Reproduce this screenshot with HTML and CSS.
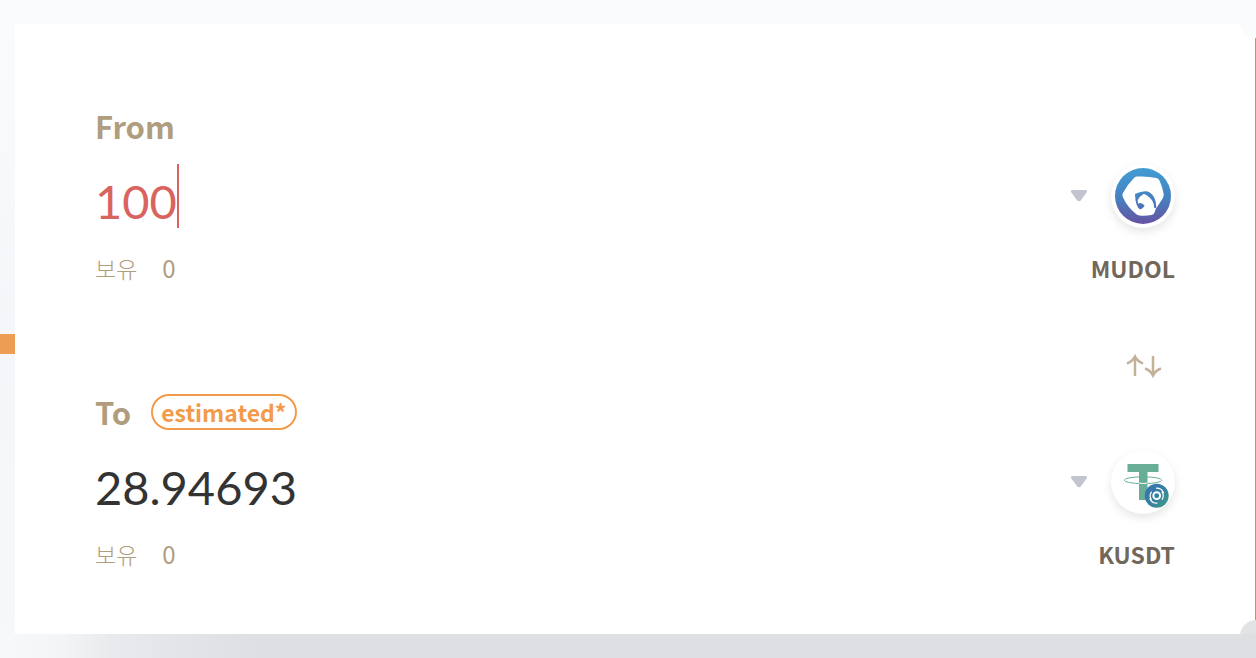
FILE: index.html
```html
<!DOCTYPE html>
<html lang="ko">
<head>
<meta charset="utf-8">
<meta name="viewport" content="width=device-width, initial-scale=1">
<title>Swap</title>
<link rel="stylesheet" href="styles.css">
</head>
<body>
<div class="page">
  <div class="rail"><span class="rail-tab"></span></div>
  <main class="card">
    <section class="side">
      <div class="heading"><label class="label" for="from-amount">From</label></div>
      <div class="row">
        <div class="field">
          <input class="amount amount-active" id="from-amount" type="text" inputmode="decimal" value="100" size="3">
          <span class="caret"></span>
        </div>
        <button class="token" type="button" aria-label="MUDOL">
          <svg class="chevron" viewBox="0 0 16 12" aria-hidden="true"><path d="M1.500 0h13C16 0 16.500 1.500 15.600 2.600L10 10.300C9 11.700 7 11.700 6 10.300L.4 2.600C-.5 1.500 0 0 1.500 0z"/></svg>
          <span class="coin">
            <svg class="coin-art" viewBox="0 0 64 64" aria-hidden="true">
              <defs><linearGradient id="mudol" gradientUnits="userSpaceOnUse" x1="32" y1="4" x2="32" y2="60"><stop offset="0" stop-color="#429cd3"/><stop offset=".5" stop-color="#4484c2"/><stop offset="1" stop-color="#6652a2"/></linearGradient></defs>
              <circle cx="32" cy="32" r="28" fill="url(#mudol)"/>
              <path fill="#fff" d="M25.500 12.600Q36 11.800 45.500 14Q47.800 14.600 48.700 17Q51.500 23 52.700 30Q52.900 32.500 51.700 34.500L45 44.500L43.500 48.500Q42.800 50.500 40.500 51Q34.500 52.200 28.500 51.600Q26.300 51.300 24.800 49.700Q16.500 43.500 11.800 33Q11 31 11.900 29Q16.500 20.500 23.200 13.800Q24.200 12.800 25.500 12.600z"/>
              <path fill="url(#mudol)" d="M24 30Q31 27 35.500 27.300Q45.500 30 45.200 44.500L43 43.500Q43.500 36.500 36 31.500Q34 29.500 32.500 30Q28.500 32.500 26.700 36L27 39.700Q30.500 37.500 33.700 41.700Q31.500 45 29.300 45.500Q24.300 43 24 30z"/>
            </svg>
          </span>
        </button>
      </div>
      <div class="row">
        <p class="balance"><span>보유</span><span class="balance-value">0</span></p>
        <p class="symbol">MUDOL</p>
      </div>
    </section>
    <div class="divider">
      <button class="swap" type="button" aria-label="Swap direction">
        <svg class="swap-art" viewBox="0 0 36 24" aria-hidden="true"><path d="M9 22V3M1 9.500Q6.500 7.500 9 2.500Q11.500 7.500 17 9.500M27 2v19M19 14.500Q24.500 16.500 27 21.500Q29.500 16.500 35 14.500"/></svg>
      </button>
    </div>
    <section class="side">
      <div class="heading"><label class="label" for="to-amount">To</label><span class="badge">estimated*</span></div>
      <div class="row">
        <div class="field">
          <input class="amount" id="to-amount" type="text" inputmode="decimal" value="28.94693" size="8">
        </div>
        <button class="token" type="button" aria-label="KUSDT">
          <svg class="chevron" viewBox="0 0 16 12" aria-hidden="true"><path d="M1.500 0h13C16 0 16.500 1.500 15.600 2.600L10 10.300C9 11.700 7 11.700 6 10.300L.4 2.600C-.5 1.500 0 0 1.500 0z"/></svg>
          <span class="coin">
            <svg class="coin-art" viewBox="0 0 64 64" aria-hidden="true">
              <defs><linearGradient id="orbit" x1="0" y1="0" x2="1" y2="1"><stop offset="0" stop-color="#3a73b4"/><stop offset=".5" stop-color="#347fa2"/><stop offset="1" stop-color="#43a083"/></linearGradient></defs>
              <path fill="#68ae97" d="M16.500 14H47.500v8H36.500v28h-8.500V22H16.500z"/>
              <ellipse cx="32" cy="30.200" rx="18.800" ry="3.400" fill="none" stroke="#68ae97" stroke-width="1"/>
              <path d="M28 33.200q4 .5 8.500 0" fill="none" stroke="#fff" stroke-width="1"/>
              <circle cx="45.700" cy="45.700" r="12" fill="url(#orbit)"/>
              <g fill="none" stroke="#fff" stroke-linecap="round">
                <circle cx="45.700" cy="45.700" r="3.400" stroke-width="1.900"/>
                <path stroke-width="1.200" d="M40.300 49.300a6.500 6.500 0 0 1 0-7.200M51.100 42.100a6.500 6.500 0 0 1 0 7.200M45.500 38.200a7.500 7.500 0 0 1 7 4.500M45.900 53.200a7.500 7.500 0 0 1-7-4.500"/>
              </g>
            </svg>
          </span>
        </button>
      </div>
      <div class="row">
        <p class="balance"><span>보유</span><span class="balance-value">0</span></p>
        <p class="symbol">KUSDT</p>
      </div>
    </section>
    <span class="notch notch-top"></span>
    <span class="notch notch-bottom"></span>
    <span class="edge"></span>
  </main>
</div>
</body>
</html>
```
FILE: styles.css
```css
* {
  box-sizing: border-box;
}

body {
  margin: 0;
  min-height: 100vh;
  font-family: "Noto Sans CJK KR", "Noto Sans", sans-serif;
  background:
    linear-gradient(90deg, #f8f9fb 0, #f3f4f5 64px, #e8eaed 112px, #e2e4e8 184px, #dddfe3 256px) left bottom / 100% 24px no-repeat,
    linear-gradient(#fafbfd 24px, #f4f6f9 50%, #f6f8fa);
}

.page {
  display: flex;
  padding: 24px 0;
}

.rail {
  flex: none;
  width: 15px;
}

.rail-tab {
  display: block;
  height: 20px;
  margin-top: 310px;
  background: #ed9e54;
}

.card {
  position: relative;
  flex: 1;
  min-width: 0;
  padding: 78px 81px 62px 80px;
  background: #fff;
  overflow: hidden;
}

.heading {
  display: flex;
  align-items: center;
  gap: 20px;
  height: 48px;
}

.label {
  font-size: 31px;
  line-height: 48px;
  font-weight: 700;
  color: #b09d7e;
}

.badge {
  padding: 0 8px;
  border: 2px solid #f29b4b;
  border-radius: 18px;
  font-size: 23px;
  line-height: 32px;
  font-weight: 700;
  color: #f29b4b;
}

.row {
  display: flex;
  align-items: center;
  justify-content: space-between;
}

.heading + .row {
  margin: 14px 0 22px;
}

.field {
  display: flex;
  min-width: 0;
}

.amount {
  field-sizing: content;
  height: 64px;
  padding: 10px 0 0;
  border: 0;
  outline: 0;
  background: none;
  font-family: Lato, sans-serif;
  font-size: 47px;
  color: #333;
}

.amount-active {
  color: #d9645f;
}

.caret {
  width: 2px;
  height: 64px;
  background: #d9645f;
}

.token,
.swap {
  padding: 0;
  border: 0;
  background: none;
  cursor: pointer;
}

.token {
  display: flex;
  align-items: center;
  gap: 24px;
}

.chevron {
  width: 16px;
  height: 12px;
  fill: #c2c5d0;
}

.coin {
  width: 64px;
  height: 64px;
  border-radius: 50%;
  background: #fff;
  box-shadow: 0 4px 10px rgba(0, 0, 0, 0.1);
}

.coin-art,
.swap-art {
  display: block;
}

.balance,
.symbol {
  margin: 0;
  font-size: 23px;
  line-height: 36px;
}

.balance {
  display: flex;
  align-items: center;
  gap: 25px;
  font-weight: 300;
  color: #b09d7e;
}

.balance-value {
  font-size: 24px;
  font-weight: 400;
}

.symbol {
  font-weight: 700;
  color: #71675a;
}

.divider {
  display: flex;
  justify-content: flex-end;
  padding: 68px 13px 10px 0;
}

.swap-art {
  width: 36px;
  height: 24px;
  fill: none;
  stroke: #c2b297;
  stroke-width: 2.5;
}

.notch {
  position: absolute;
  right: -16px;
  width: 32px;
  height: 32px;
  border-radius: 50%;
}

.notch-top {
  top: -18px;
  background: #fafbfd;
}

.notch-bottom {
  bottom: -18px;
  background: #e2e3e5;
}

.edge {
  position: absolute;
  top: 14px;
  right: 0;
  bottom: 14px;
  width: 1px;
  background: #ab9c80;
}
```
